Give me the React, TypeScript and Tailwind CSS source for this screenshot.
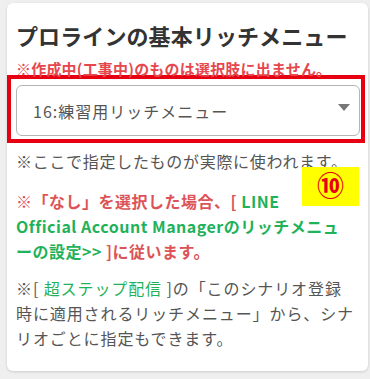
export default function App() {
  return (
    <div className="min-h-[379px] w-[370px] bg-[#efefef] pl-[7px] pr-[2px] pt-[3px] pb-[5px] font-['Noto_Sans_CJK_JP',sans-serif]">
      <div className="relative rounded-md bg-white pl-[9px] pr-[4px] pt-[16px] pb-[20px] shadow-[0_1px_3px_rgba(0,0,0,0.15)]">
        <h2 className="text-[22px] font-bold leading-[32px] tracking-[0.1px] text-[#333]">
          プロラインの基本リッチメニュー
        </h2>
        <p className="mt-[8px] text-[15px] font-bold leading-[20px] tracking-[0.2px] text-[#e6474d]">
          ※作成中(工事中)のものは選択肢に出ません。
        </p>

        <div className="-ml-[9px] mt-[-4px] w-[358px] border-4 border-[#e60012] pl-[5px] pt-[6px] pr-[1px] pb-[3px]">
          <div className="flex h-[51px] items-center justify-between rounded-md border border-[#b5b5b5] bg-white pl-[16px] pr-[9px]">
            <span className="text-[16px] tracking-[1px] text-[#555]">16:練習用リッチメニュー</span>
            <svg width="12" height="7" viewBox="0 0 12 7" className="mb-[7px]">
              <path d="M0 0 H12 L6 7 Z" fill="#777" />
            </svg>
          </div>
        </div>

        <p className="mt-[6px] whitespace-nowrap text-[16px] leading-[24px] tracking-[0.7px] text-[#555]">
          ※ここで指定したものが実際に使われます。
        </p>

        <p className="mt-[16px] whitespace-nowrap text-[16px] font-bold leading-[25px] tracking-[0.5px] text-[#dc5457]">
          ※「なし」を選択した場合、[ <span className="text-[#1fb25a]">LINE</span>
          <br />
          <span className="text-[#1fb25a]">
            Official Account Managerのリッチメニュ
            <br />
            ーの設定&gt;&gt;
          </span>{" "}
          ]に従います。
        </p>

        <p className="mt-[12px] whitespace-nowrap text-[16px] leading-[25px] tracking-[0.9px] text-[#555]">
          ※[ <span className="text-[#1fb25a]">超ステップ配信</span> ]の「このシナリオ登録
          <br />
          時に適用されるリッチメニュー」から、シナ
          <br />
          リオごとに指定もできます。
        </p>

        <div className="absolute left-[295px] top-[164px] flex h-[39px] w-[57px] items-center justify-center bg-[#ffff00]">
          <span className="mb-[4px] text-[27px] font-bold leading-none text-[#e60012]">⑩</span>
        </div>
      </div>
    </div>
  );
}
